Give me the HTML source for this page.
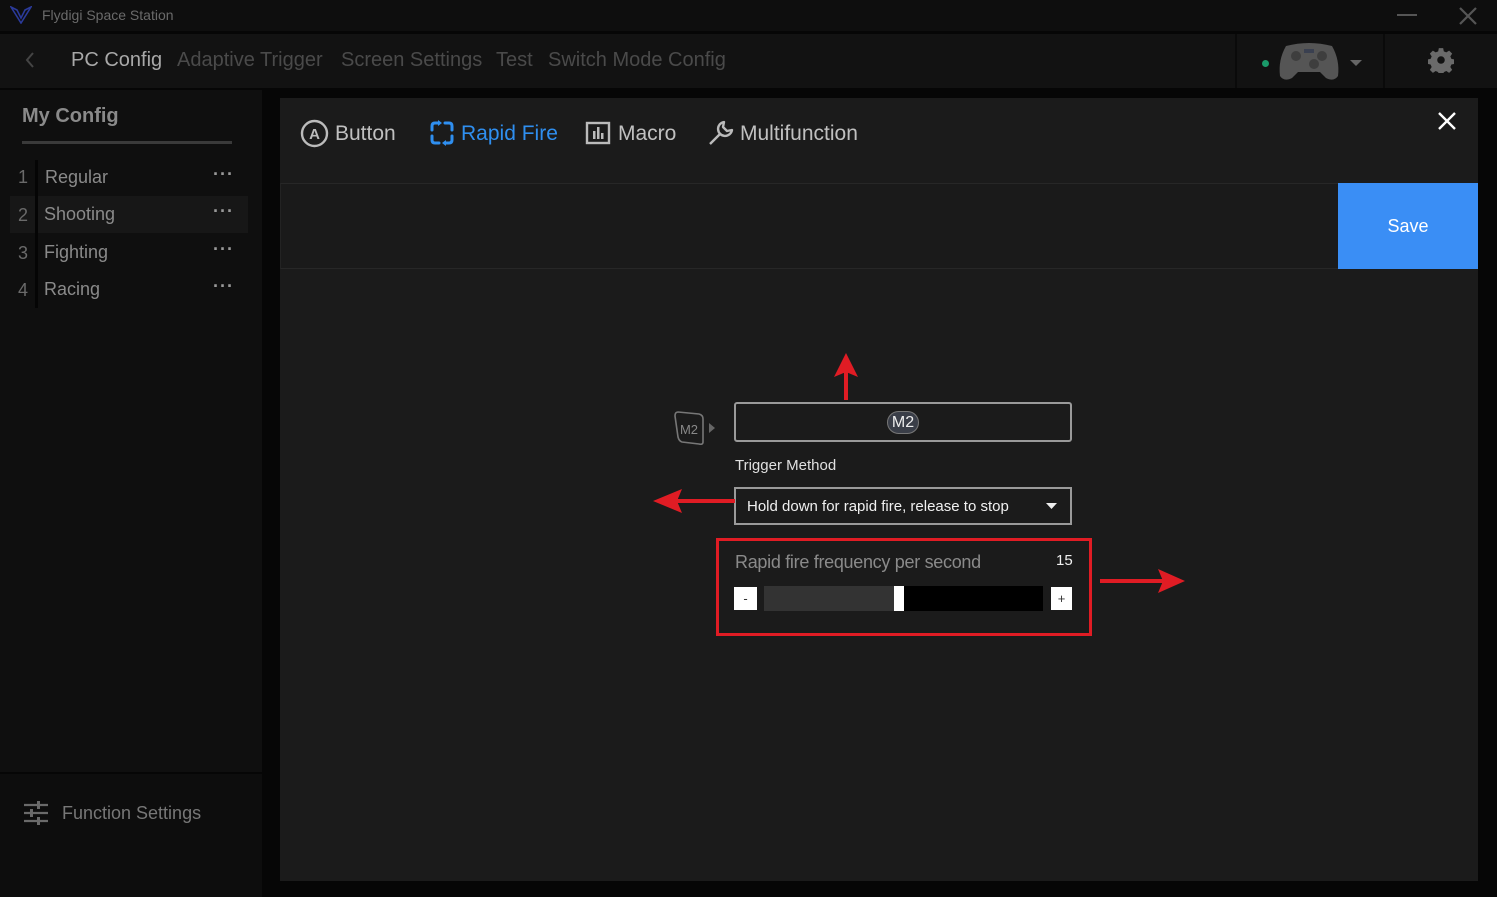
<!DOCTYPE html>
<html><head><meta charset="utf-8"><style>
*{margin:0;padding:0;box-sizing:border-box}
body{width:1497px;height:897px;background:#060606;font-family:"Liberation Sans",sans-serif;position:relative;overflow:hidden;color:#888}
.abs{position:absolute}
.dots{font-size:18px;font-weight:bold;color:#999;letter-spacing:1px}
</style></head><body>
<div class="abs" style="left:0;top:0;width:1497px;height:31px;background:#0e0e0e"></div>
<svg class="abs" style="left:10px;top:6px" width="22" height="18" viewBox="0 0 22 18"><path d="M1 1 L11 17 L21 1 L15 4 L11 12 L7 4 Z" fill="none" stroke="#2b3a9a" stroke-width="1.6"/></svg>
<div class="abs" style="left:42px;top:7px;font-size:14px;color:#6a6a6a">Flydigi Space Station</div>
<div class="abs" style="left:1397px;top:14px;width:20px;height:2px;background:#555"></div>
<svg class="abs" style="left:1459px;top:7px" width="18" height="18"><path d="M1 1L17 17M17 1L1 17" stroke="#555" stroke-width="2.2"/></svg>
<div class="abs" style="left:0;top:34px;width:1497px;height:54px;background:#121212"></div>
<svg class="abs" style="left:24px;top:51px" width="12" height="18"><path d="M9 2L3 9L9 16" fill="none" stroke="#444" stroke-width="2"/></svg>
<div class="abs" style="left:71px;top:49px;font-size:20px;color:#a8a8a8">PC Config</div>
<div class="abs" style="left:177px;top:49px;font-size:20px;color:#4a4a4a">Adaptive Trigger</div>
<div class="abs" style="left:341px;top:49px;font-size:20px;color:#4a4a4a">Screen Settings</div>
<div class="abs" style="left:496px;top:49px;font-size:20px;color:#4a4a4a">Test</div>
<div class="abs" style="left:548px;top:49px;font-size:20px;color:#4a4a4a">Switch Mode Config</div>
<div class="abs" style="left:1235px;top:34px;width:2px;height:54px;background:#0a0a0a"></div>
<div class="abs" style="left:1383px;top:34px;width:2px;height:54px;background:#0a0a0a"></div>
<div class="abs" style="left:1262px;top:60px;width:7px;height:7px;border-radius:50%;background:#1a9a6a"></div>
<svg class="abs" style="left:1276px;top:40px" width="66" height="44" viewBox="0 0 66 44"><path d="M10 6 Q33 0 56 6 Q64 20 62 36 Q58 42 50 38 L44 32 L22 32 L16 38 Q8 42 4 36 Q2 20 10 6Z" fill="#555"/><circle cx="20" cy="16" r="5" fill="#3e3e3e"/><circle cx="46" cy="16" r="5" fill="#3e3e3e"/><circle cx="38" cy="24" r="5" fill="#3e3e3e"/><rect x="28" y="9" width="10" height="4" fill="#3a4050"/></svg>
<svg class="abs" style="left:1350px;top:60px" width="12" height="7"><path d="M0 0H12L6 6Z" fill="#666"/></svg>
<svg class="abs" style="left:1428px;top:47px" width="26" height="26" viewBox="0 0 24 24"><path d="M10 1h4l.6 3 2.3 1 2.6-1.7 2.8 2.8-1.7 2.6 1 2.3 3 .6v4l-3 .6-1 2.3 1.7 2.6-2.8 2.8-2.6-1.7-2.3 1-.6 3h-4l-.6-3-2.3-1-2.6 1.7-2.8-2.8 1.7-2.6-1-2.3-3-.6v-4l3-.6 1-2.3-1.7-2.6 2.8-2.8 2.6 1.7 2.3-1z" fill="#6a6a6a"/><circle cx="12" cy="12" r="3.5" fill="#121212"/></svg>
<div class="abs" style="left:0;top:90px;width:262px;height:682px;background:#0f0f0f"></div>
<div class="abs" style="left:0;top:774px;width:262px;height:123px;background:#0d0d0d"></div>
<div class="abs" style="left:22px;top:105px;font-size:20px;font-weight:bold;color:#8a8a8a">My Config</div>
<div class="abs" style="left:22px;top:141px;width:210px;height:3px;background:#3a3a3a"></div>
<div class="abs" style="left:10px;top:196px;width:238px;height:37px;background:#171717"></div>
<div class="abs" style="left:18px;top:167px;font-size:18px;color:#6a6a6a">1</div>
<div class="abs" style="left:18px;top:205px;font-size:18px;color:#6a6a6a">2</div>
<div class="abs" style="left:18px;top:243px;font-size:18px;color:#6a6a6a">3</div>
<div class="abs" style="left:18px;top:280px;font-size:18px;color:#6a6a6a">4</div>
<div class="abs" style="left:35px;top:160px;width:3px;height:148px;background:#050505"></div>
<div class="abs" style="left:45px;top:167px;font-size:18px;color:#8a8a8a">Regular</div>
<div class="abs" style="left:44px;top:204px;font-size:18px;color:#8a8a8a">Shooting</div>
<div class="abs" style="left:44px;top:242px;font-size:18px;color:#8a8a8a">Fighting</div>
<div class="abs" style="left:44px;top:279px;font-size:18px;color:#8a8a8a">Racing</div>
<div class="abs dots" style="left:213px;top:164px">···</div>
<div class="abs dots" style="left:213px;top:201px">···</div>
<div class="abs dots" style="left:213px;top:239px">···</div>
<div class="abs dots" style="left:213px;top:276px">···</div>
<svg class="abs" style="left:23px;top:801px" width="26" height="24"><g stroke="#6a6a6a" stroke-width="2.2"><path d="M1 4H25M1 12H25M1 20H25"/></g><g fill="#6a6a6a"><rect x="14" y="0" width="3" height="8"/><rect x="7" y="8" width="3" height="8"/><rect x="14" y="16" width="3" height="8"/></g></svg>
<div class="abs" style="left:62px;top:803px;font-size:18px;color:#777">Function Settings</div>
<div class="abs" style="left:280px;top:98px;width:1198px;height:783px;background:#1b1b1b"></div>
<svg class="abs" style="left:300px;top:119px" width="29" height="29"><circle cx="14.5" cy="14.5" r="12.5" fill="none" stroke="#bbb" stroke-width="2.4"/><text x="14.5" y="20" text-anchor="middle" font-family="Liberation Sans" font-weight="bold" font-size="15" fill="#bbb">A</text></svg>
<div class="abs" style="left:335px;top:122px;font-size:21px;color:#c0c0c0">Button</div>
<svg class="abs" style="left:428px;top:119px" width="28" height="28" viewBox="0 0 28 28"><g fill="none" stroke="#2f8ff0" stroke-width="3" stroke-linecap="round"><path d="M4 11V7Q4 4 7 4H11"/><path d="M17 4H21Q24 4 24 7V11"/><path d="M24 17V21Q24 24 21 24H17"/><path d="M11 24H7Q4 24 4 21V17"/></g><g fill="#2f8ff0"><path d="M10 1L14 4L10 7Z"/><path d="M18 21L14 24L18 27Z"/></g></svg>
<div class="abs" style="left:461px;top:122px;font-size:21px;color:#2f8ff0">Rapid Fire</div>
<svg class="abs" style="left:585px;top:121px" width="26" height="24"><rect x="2" y="2" width="22" height="20" fill="none" stroke="#bbb" stroke-width="2.4"/><g fill="#bbb"><rect x="8" y="10" width="2.5" height="8"/><rect x="12" y="6" width="2.5" height="12"/><rect x="16" y="12" width="2.5" height="6"/></g></svg>
<div class="abs" style="left:618px;top:122px;font-size:21px;color:#c0c0c0">Macro</div>
<svg class="abs" style="left:707px;top:119px" width="28" height="28" viewBox="0 0 28 28"><path d="M3 25 L14 14 M17 3 A7 7 0 1 0 25 11 L20 12 L16 8 Z" fill="none" stroke="#bbb" stroke-width="2.4" stroke-linejoin="round"/></svg>
<div class="abs" style="left:740px;top:122px;font-size:21px;color:#c0c0c0">Multifunction</div>
<svg class="abs" style="left:1438px;top:112px" width="18" height="18"><path d="M1 1L17 17M17 1L1 17" stroke="#fff" stroke-width="2.4"/></svg>
<div class="abs" style="left:280px;top:183px;width:1058px;height:86px;border-top:1px solid #272727;border-bottom:1px solid #272727;border-left:1px solid #232323;background:#1a1a1a"></div>
<div class="abs" style="left:1338px;top:183px;width:140px;height:86px;background:#3a8ef5;color:#fff;font-size:18px;text-align:center;line-height:86px">Save</div>
<svg class="abs" style="left:673px;top:410px" width="46" height="38"><path d="M5 2 L26 4 Q30 5 30 9 L30 32 Q30 35 26 34 L9 32 Q6 31 5 27 L2 6 Q2 2 5 2Z" fill="none" stroke="#777" stroke-width="1.6"/><text x="16" y="24" text-anchor="middle" font-family="Liberation Sans" font-size="13" fill="#888">M2</text><path d="M36 13 L42 18 L36 23Z" fill="#666"/></svg>
<div class="abs" style="left:734px;top:402px;width:338px;height:40px;border:2px solid #9a9a9a;border-radius:3px"></div>
<div class="abs" style="left:887px;top:411px;width:32px;height:23px;border-radius:12px;background:#3a3e48;border:1px solid #777;color:#eee;font-size:16px;text-align:center;line-height:21px">M2</div>
<div class="abs" style="left:735px;top:457px;font-size:15px;color:#e0e0e0">Trigger Method</div>
<div class="abs" style="left:734px;top:487px;width:338px;height:38px;border:2px solid #9a9a9a"></div>
<div class="abs" style="left:747px;top:498px;font-size:15px;color:#f0f0f0">Hold down for rapid fire, release to stop</div>
<svg class="abs" style="left:1046px;top:503px" width="11" height="6"><path d="M0 0H11L5.5 6Z" fill="#eee"/></svg>
<div class="abs" style="left:716px;top:538px;width:376px;height:98px;border:3px solid #e01c24"></div>
<div class="abs" style="left:735px;top:552px;font-size:18px;color:#8a8a8a;letter-spacing:-0.3px">Rapid fire frequency per second</div>
<div class="abs" style="left:1056px;top:552px;font-size:15px;color:#f0f0f0">15</div>
<div class="abs" style="left:734px;top:587px;width:23px;height:23px;background:#fff;color:#333;font-size:13px;text-align:center;line-height:23px">-</div>
<div class="abs" style="left:764px;top:586px;width:130px;height:25px;background:#333"></div>
<div class="abs" style="left:894px;top:586px;width:10px;height:25px;background:#fff"></div>
<div class="abs" style="left:904px;top:586px;width:139px;height:25px;background:#000"></div>
<div class="abs" style="left:1051px;top:587px;width:21px;height:23px;background:#fff;color:#333;font-size:13px;text-align:center;line-height:23px">+</div>
<svg class="abs" style="left:650px;top:350px" width="540" height="250"><g fill="#e01c24"><rect x="194" y="20" width="4" height="30"/><path d="M196 3 L184 27 L196 22 L208 27Z"/><rect x="20" y="149" width="65" height="4"/><path d="M3 151 L32 139 L27 151 L32 163Z"/><rect x="450" y="229" width="65" height="4"/><path d="M535 231 L508 219 L513 231 L508 243Z"/></g></svg>
</body></html>
